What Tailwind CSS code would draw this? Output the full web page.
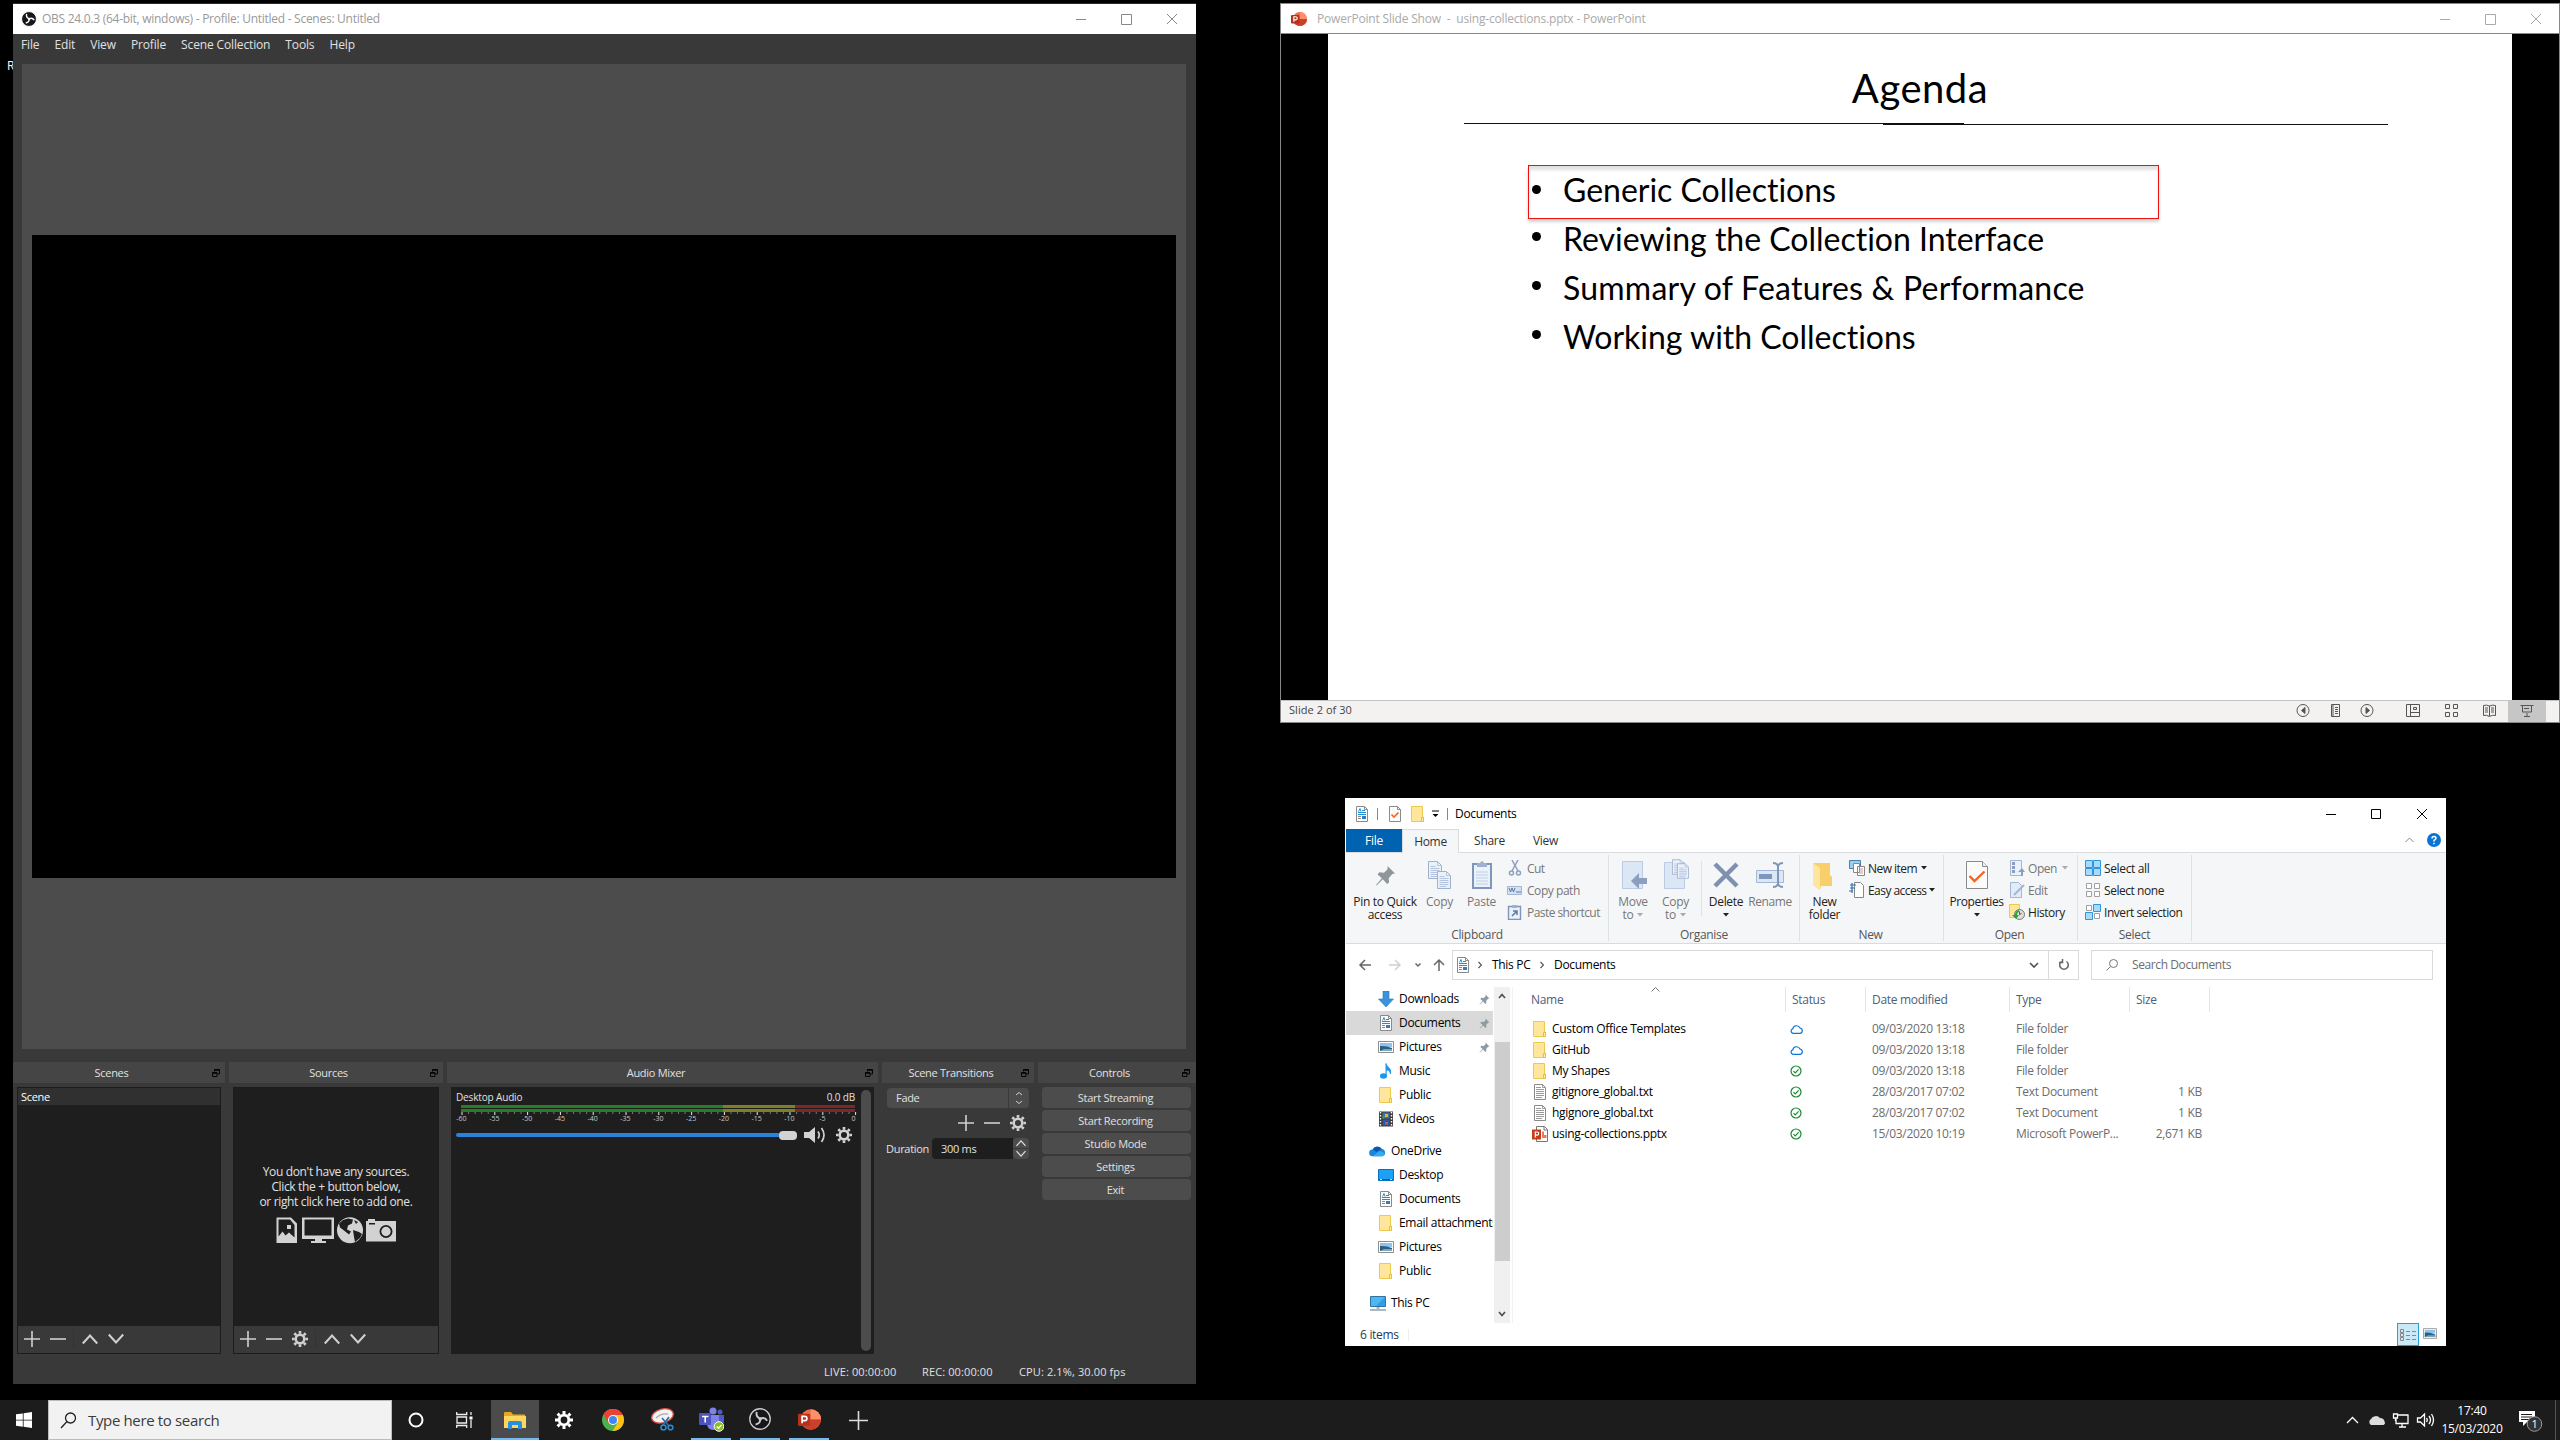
<!DOCTYPE html>
<html lang="en">
<head>
<meta charset="utf-8">
<title>Desktop</title>
<script src="https://cdn.jsdelivr.net/npm/@tailwindcss/browser@4"></script>
</head>
<body class="bg-black">
<svg class="hidden">
  <symbol id="gear" viewBox="0 0 18 18"><g fill="none" stroke="currentColor"><circle cx="9" cy="9" r="4.8" stroke-width="2.8"/><path stroke-width="3" d="M9 0v3M9 15v3M0 9h3M15 9h3M2.6 2.6l2.1 2.1M13.3 13.3l2.1 2.1M2.6 15.4l2.1-2.1M13.3 4.7l2.1-2.1"/></g></symbol>
  <symbol id="plus" viewBox="0 0 16 16"><path d="M8 0v16M0 8h16" stroke="currentColor" stroke-width="1.6"/></symbol>
  <symbol id="minus" viewBox="0 0 16 16"><path d="M0 8h16" stroke="currentColor" stroke-width="1.6"/></symbol>
  <symbol id="up" viewBox="0 0 16 16"><path d="M.8 12.5L8 4.500l7.200 8" fill="none" stroke="currentColor" stroke-width="2"/></symbol>
  <symbol id="down" viewBox="0 0 16 16"><path d="M.8 3.500L8 11.500l7.200-8" fill="none" stroke="currentColor" stroke-width="2"/></symbol>
  <symbol id="undock" viewBox="0 0 8 8"><g fill="none" stroke="#050505"><path d="M2.500 2.500v-2h5v4.500h-2"/><path d="M.5 3.500h4.500v4h-4.500z"/><path d="M2.500 1h5M.5 4h4.500" stroke-width="1.600"/></g></symbol>
  <symbol id="docs" viewBox="0 0 12 16"><path d="M.5.5h8l3 3v12h-11z" fill="#fff" stroke="#8a8a8a"/><path d="M8.500.5v3h3" fill="none" stroke="#8a8a8a"/><path d="M2.500 5.500L4 2.500l1 3M6 4.500h3M2 6.500h8M2 8.500h8" fill="none" stroke="#1e90d8"/><path d="M2 10.500h3M2 12.500h3" stroke="#888"/><path d="M6 10h4v3H6z" fill="#2b7fc4"/></symbol>
  <symbol id="folder" viewBox="0 0 13 16"><path d="M.5.500h11v10.500h1v4.500H.5z" fill="#ffe69a" stroke="#ecc94f"/><path d="M10.500 15.500v-4h2v4z" fill="#ffefb5" stroke="#e6be3d"/></symbol>
  <symbol id="txt" viewBox="0 0 12 16"><path d="M.5.5h8l3 3v12h-11z" fill="#fff" stroke="#8a8a8a"/><path d="M8.500.5v3h3M2 3.500h5M2 5.500h8M2 7.500h8M2 9.500h8M2 11.500h8M2 13.500h6" fill="none" stroke="#9a9a9a"/></symbol>
  <symbol id="pptx" viewBox="0 0 16 16"><path d="M4.500.5h8l3 3v12h-11z" fill="#fff" stroke="#777"/><path d="M12 .5v3.500h3.500" fill="none" stroke="#777"/><path d="M10 5.500h2v3.500h2.500v3H10z" fill="#f0785a"/><path d="M0 3.500h9v10H0z" fill="#c43e1c"/><path d="M3.300 11.500V6h1.800a1.500 1.500 0 010 3.200H3.300" fill="none" stroke="#fff" stroke-width="1.200"/></symbol>
  <symbol id="pic" viewBox="0 0 16 12"><path d="M.5.5h15v11H.5z" fill="#fff" stroke="#8f8f8f"/><path d="M2 2h12v4H2z" fill="#8cc3ef"/><path d="M2 5q6-.5 12 2v3H2z" fill="#2f5f7d"/><path d="M6 8h8v2H2z" fill="#78a8c4"/></symbol>
  <symbol id="music" viewBox="0 0 12 16"><ellipse cx="3.500" cy="13" rx="3.500" ry="2.700" fill="#1797f2"/><path d="M6 13V.5C6.500 4 11.500 4.500 10.500 11 10 7.500 8 7 6.500 7" fill="#1797f2" stroke="#1797f2"/></symbol>
  <symbol id="video" viewBox="0 0 14 16"><path d="M0 .5h14v15H0z" fill="#3a3a3a"/><path d="M1.500 1v14M12.500 1v14" stroke="#fff" stroke-width="1.400" stroke-dasharray="1.500 1.500"/><path d="M3.500 1.500h7v6h-7z" fill="#3b6fb5"/><path d="M3.500 8.500h7v6h-7z" fill="#2d56a0"/><path d="M6 3h3v3H6z" fill="#e8b52b"/><path d="M6 11h3v2.500H6z" fill="#dd5136"/><path d="M3.500 5h2v2.500h-2z" fill="#40a34a"/></symbol>
  <symbol id="dl" viewBox="0 0 16 16"><path d="M5 0h6v8h4.500L8 16 .5 8H5z" fill="#3c93dc" stroke="#2478be" stroke-width=".6"/></symbol>
  <symbol id="cloud" viewBox="0 0 18 12"><path d="M3.500 11.500a3.500 3.500 0 01.300-7A5.500 5.500 0 0113.500 4a3.800 3.800 0 01.5 7.500z" fill="#1a86dd"/><path d="M4 4.500A5.500 5.500 0 0113.500 4L8 7z" fill="#0c57a8"/><path d="M4 11.500l7-5.500 5 1.500a3 3 0 01-2 4z" fill="#33aaf2"/></symbol>
  <symbol id="desk" viewBox="0 0 16 12"><path d="M.5.500h15v11H.5z" fill="#1ba1f5" stroke="#0c6fbe"/><path d="M1 10.500h14" stroke="#0b5796"/><path d="M2 10.500h2M12 10.500h2" stroke="#fff" stroke-width=".8"/></symbol>
  <symbol id="pc" viewBox="0 0 16 15"><path d="M.5.500h15v10H.5z" fill="#4cb7f3" stroke="#35719b"/><path d="M15 1L6 10h9z" fill="#2c9fe6"/><path d="M6.500 12h3M0 14h16" stroke="#8aa0b2" stroke-width="1.400"/></symbol>
  <symbol id="pin" viewBox="0 0 20 20"><path d="M12 1l7 7-2.500.5-3.500 4 .5 4-2 1.500-4-4.500-6 6L1 19l5.500-6.500L2.500 9 4 7l4.500.3L12 4z" fill="currentColor"/></symbol>
  <symbol id="tri" viewBox="0 0 6 4"><path d="M0 0h6L3 3.500z" fill="currentColor"/></symbol>
  <symbol id="page" viewBox="0 0 14 18"><path d="M.5.5h9l4 4v13H.5z" fill="#e9f1fb" stroke="#9fb1cf"/><path d="M9.500.5v4h4M2.500 5.500h5M2.500 7.500h9M2.500 9.500h9M2.500 11.500h9M2.500 13.500h9M2.500 15.500h7" fill="none" stroke="#b6c5dd"/></symbol>
  <symbol id="checkdoc" viewBox="0 0 22 28"><path d="M.5.500h16l5 5v22H.5z" fill="#fbfbfb" stroke="#8a8a8a"/><path d="M16.500.5v5h5" fill="#eee" stroke="#8a8a8a"/><path d="M3.500 15l5 5L18.500 10.500" fill="none" stroke="#f4641e" stroke-width="2.400"/></symbol>
  <symbol id="checksmall" viewBox="0 0 12 16"><path d="M.5.5h8l3 3v12h-11z" fill="#fbfbfb" stroke="#8a8a8a"/><path d="M8.500.5v3h3" fill="none" stroke="#8a8a8a"/><path d="M2.500 8.500l2.500 2.500L9.500 6.500" fill="none" stroke="#f4641e" stroke-width="1.600"/></symbol>
  <symbol id="ppt" viewBox="0 0 18 18"><circle cx="10" cy="9" r="8" fill="#ed6c47"/><path d="M10 1a8 8 0 018 8h-8z" fill="#ff8f6b"/><path d="M2 9h16a8 8 0 01-16 0z" fill="#c9412a"/><rect y="4.500" width="9.500" height="9.500" rx="1" fill="#b7321b"/><path d="M3.200 12V6.500h2.100a1.700 1.700 0 010 3.400H3.200" fill="none" stroke="#fff" stroke-width="1.300"/></symbol>
  <symbol id="obs" viewBox="0 0 20 20"><circle cx="10" cy="10" r="9.300" fill="#17161a" stroke="currentColor" stroke-width="1.200"/><path d="M7 3.500q-1 4.500 3.200 6.200M10.200 9.700q4-2 6.300 1.800M10.200 9.700q.3 4.500-4.200 5.300" fill="none" stroke="currentColor" stroke-width="1.700"/><circle cx="10.200" cy="9.900" r="1.500" fill="currentColor"/></symbol>
  <symbol id="ok" viewBox="0 0 12 12"><circle cx="6" cy="6" r="5" fill="none" stroke="#188a2e" stroke-width="1.200"/><path d="M3.500 6.200l1.700 1.700 3.400-3.500" fill="none" stroke="#188a2e" stroke-width="1.200"/></symbol>
  <symbol id="cl" viewBox="0 0 13 10"><path d="M3 9.300a2.300 2.300 0 01-.2-4.500 3.800 3.800 0 017.200-.8 2.700 2.700 0 01.2 5.300z" fill="none" stroke="#0a76d6" stroke-width="1.200"/></symbol>
</svg>

<main class="relative h-[1440px] w-[2560px] overflow-hidden bg-black font-['Open_Sans',sans-serif] text-[12px] leading-4 tracking-[-0.3px] whitespace-nowrap">
<div class="absolute left-[7px] top-[58px] text-white">R</div>

<!-- OBS Studio -->
<section class="absolute left-[13px] top-[3px] flex h-[1381px] w-[1183px] flex-col overflow-hidden border-t border-[#2b2b2b] bg-[#3a393a] text-[11px] text-[#e1e0e1]">
  <header class="flex h-[30px] items-center bg-white pl-2 text-[12px] text-[#999]">
    <svg class="size-4 text-white"><use href="#obs"/></svg>
    <span class="ml-[5px] flex-1 tracking-[-0.27px]">OBS 24.0.3 (64-bit, windows) - Profile: Untitled - Scenes: Untitled</span>
    <svg class="mr-[17px] h-3 w-[104px]" fill="none" stroke="#888"><path d="M1 6.500h10M46.500 1.500h10v10h-10zM92 1l10 10M102 1L92 11"/></svg>
  </header>
  <nav class="flex h-[22px] items-center gap-[15px] pl-2 text-[12px] tracking-[-0.14px]"><span>File</span><span>Edit</span><span>View</span><span>Profile</span><span>Scene Collection</span><span>Tools</span><span>Help</span></nav>
  <div class="mr-[10px] ml-[9px] mt-2 h-[985px] shrink-0 bg-[#4c4c4c] px-[10px] pt-[171px]"><div class="h-[643px] bg-black"></div></div>

  <div class="mt-[13px] flex h-[292px] shrink-0 gap-1">
    <div class="w-[212px]">
      <h2 class="flex h-[21px] items-center bg-[#464546] pr-[5px]"><span class="flex-1 pr-0.5 text-center">Scenes</span><svg class="size-2"><use href="#undock"/></svg></h2>
      <div class="mx-1 mt-1 flex h-[267px] flex-col border border-[#1c1c1c] bg-[#1f1e1f] text-white">
        <div class="flex h-[17px] items-center bg-[#303030] pl-[3px]">Scene</div>
        <div class="flex-1"></div>
        <div class="flex h-[27px] items-center bg-[#3a393a] pb-px pl-1.5 text-[#d0d0d0]"><svg class="size-4"><use href="#plus"/></svg><svg class="ml-2.5 size-4"><use href="#minus"/></svg><i class="ml-[7px] h-[18px] w-px bg-[#333]"></i><svg class="ml-2 size-4"><use href="#up"/></svg><svg class="ml-2.5 size-4"><use href="#down"/></svg></div>
      </div>
    </div>
    <div class="w-[214px]">
      <h2 class="flex h-[21px] items-center bg-[#464546] pr-[5px]"><span class="flex-1 pr-0.5 text-center">Sources</span><svg class="size-2"><use href="#undock"/></svg></h2>
      <div class="mx-1 mt-1 flex h-[267px] flex-col border border-[#1c1c1c] bg-[#1f1e1f]">
        <div class="flex flex-1 flex-col items-center pt-[76px] text-[12px] leading-[15px] tracking-[-0.35px]"><span>You don't have any sources.</span><span>Click the + button below,</span><span>or right click here to add one.</span>
          <svg class="mt-[8px] h-[27px] w-[122px]" fill="#d2d2d2">
            <path fill-rule="evenodd" d="M2 .5h14l6 6V26H1.500V1zM3.500 2.500v17l4-5 3 4 3.500-3 5.500 5V8L15 2.500zM12 8h4v4h-4z"/>
            <path fill-rule="evenodd" d="M27 .5h32v21.500H47v2h4v2H36v-2h4v-2H27zM29.500 2.500v16h27v-16z"/>
            <circle cx="75" cy="13.200" r="13"/><path d="M68 3l5-1.500 5 1-1 4-4 2-1 4 4 2-2 3-5-4-4-3-1-4zM78 13l6 2 3 2-2 4-5 4-1-5zM79 3l4 2-2 2z" fill="#1f1e1f"/>
            <path fill-rule="evenodd" d="M91 4h2V2h7v2h21v20.500H91zM94 6v1.500h6V6zM111 8a6.500 6.500 0 100 13 6.500 6.500 0 000-13zM111 9.800a4.700 4.700 0 110 9.400 4.700 4.700 0 010-9.400z"/>
          </svg>
        </div>
        <div class="flex h-[27px] items-center bg-[#3a393a] pb-px pl-1.5 text-[#d0d0d0]"><svg class="size-4"><use href="#plus"/></svg><svg class="ml-2.5 size-4"><use href="#minus"/></svg><svg class="ml-2.5 size-4"><use href="#gear"/></svg><i class="ml-[7px] h-[18px] w-px bg-[#333]"></i><svg class="ml-2 size-4"><use href="#up"/></svg><svg class="ml-2.5 size-4"><use href="#down"/></svg></div>
      </div>
    </div>
    <div class="w-[431px]">
      <h2 class="flex h-[21px] items-center bg-[#464546] pr-[5px]"><span class="flex-1 text-center">Audio Mixer</span><svg class="size-2"><use href="#undock"/></svg></h2>
      <div class="mx-1 mt-1 flex h-[267px] bg-[#1f1e1f] pl-[5px]">
        <div class="w-[400px] pt-[3px]">
          <div class="flex h-[15px] items-center justify-between pr-[1px] pb-px text-[10px] tracking-[-0.15px]"><span>Desktop Audio</span><span>0.0 dB</span></div>
          <div class="ml-[5px] flex h-[3px] w-[394px]"><i class="w-[262px] bg-[#267f26]"></i><i class="w-[72px] bg-[#7f7f26]"></i><i class="flex-1 bg-[#7f2626]"></i></div>
          <div class="ml-[5px] mt-px flex h-[3px] w-[394px]"><i class="w-[262px] bg-[#267f26]"></i><i class="w-[72px] bg-[#7f7f26]"></i><i class="flex-1 bg-[#7f2626]"></i></div>
          <svg id="ticks" class="h-[14px] w-[400px] overflow-visible font-['Open_Sans',sans-serif] text-[7px] tracking-normal" fill="#c8c8c8"></svg>
          <div class="flex h-[18px] items-center">
            <i class="h-1 w-[323px] rounded-l bg-[#2a82da]"></i><i class="h-[9px] w-[18px] rounded-sm bg-[#d2d2d2]"></i>
            <svg class="ml-[7px] h-4 w-[23px]"><path d="M0 5h5l6-5v16l-6-5H0z" fill="#d2d2d2"/><path d="M14 4.500q2.500 3.500 0 7M17.500 1q5 7 0 14" fill="none" stroke="#d2d2d2" stroke-width="1.700"/></svg>
            <svg class="ml-[9px] size-4 text-[#d2d2d2]"><use href="#gear"/></svg>
          </div>
        </div>
        <i class="ml-[5px] mt-[3px] h-[261px] w-[10px] rounded-full bg-[#4c4c4c]"></i>
      </div>
    </div>
    <div class="w-[152px]">
      <h2 class="flex h-[21px] items-center bg-[#464546] pr-[5px]"><span class="flex-1 pr-px text-center">Scene Transitions</span><svg class="size-2"><use href="#undock"/></svg></h2>
      <div class="mt-[5px] flex flex-col px-[5px]">
        <div class="flex h-5 gap-px"><span class="flex flex-1 items-center rounded-l-sm bg-[#4c4c4c] pl-[9px]">Fade</span><span class="flex w-5 flex-col items-center justify-center rounded-r-sm bg-[#4c4c4c]"><svg class="h-3 w-1.5" fill="none" stroke="#d0d0d0"><path d="M0 3l3-2.500L6 3M0 9l3 2.500L6 9"/></svg></span></div>
        <div class="flex h-[30px] items-center justify-end gap-2.5 pr-[3px] text-[#d0d0d0]"><svg class="size-4"><use href="#plus"/></svg><svg class="size-4"><use href="#minus"/></svg><svg class="size-4"><use href="#gear"/></svg></div>
        <div class="flex h-[21px] items-center"><span class="-ml-px w-[46px] shrink-0">Duration</span><span class="flex h-[21px] w-[81px] items-center rounded-l bg-[#1f1e1f] pl-[9px]">300 ms</span><span class="flex flex-col gap-px"><i class="flex h-[10px] w-4 items-center justify-center rounded-t bg-[#4c4c4c]"><svg class="size-2.5"><use href="#up"/></svg></i><i class="flex h-[10px] w-4 items-center justify-center rounded-b bg-[#4c4c4c]"><svg class="size-2.5"><use href="#down"/></svg></i></span></div>
      </div>
    </div>
    <div class="w-[158px]">
      <h2 class="flex h-[21px] items-center bg-[#464546] pr-[6px]"><span class="flex-1 pr-px text-center">Controls</span><svg class="size-2"><use href="#undock"/></svg></h2>
      <div class="mt-1 flex flex-col gap-0.5 pl-1 pr-[5px] text-center leading-[21px]"><b class="h-[21px] rounded-sm bg-[#4c4c4c] pr-0.5 font-normal">Start Streaming</b><b class="h-[21px] rounded-sm bg-[#4c4c4c] pr-0.5 font-normal">Start Recording</b><b class="h-[21px] rounded-sm bg-[#4c4c4c] pr-0.5 font-normal">Studio Mode</b><b class="h-[21px] rounded-sm bg-[#4c4c4c] pr-0.5 font-normal">Settings</b><b class="h-[21px] rounded-sm bg-[#4c4c4c] pr-0.5 font-normal">Exit</b></div>
    </div>
  </div>
  <footer class="mt-[10px] flex h-4 items-center pl-[811px] tracking-[0.12px]"><span class="w-[98px]">LIVE: 00:00:00</span><span class="w-[97px]">REC: 00:00:00</span><span>CPU: 2.1%, 30.00 fps</span></footer>
</section>

<!-- PowerPoint slide show -->
<section class="absolute left-[1280px] top-[3px] flex h-[720px] w-[1280px] flex-col border border-[#888] bg-black">
  <header class="flex h-[30px] shrink-0 items-center border-b border-[#888] bg-white pl-[10px] text-[#aaa]">
    <svg class="size-4"><use href="#ppt"/></svg><span class="ml-[10px] flex-1 whitespace-pre tracking-[-0.19px]">PowerPoint Slide Show  -  using-collections.pptx - PowerPoint</span>
    <svg class="mr-[16px] h-3 w-[104px]" fill="none" stroke="#aaa"><path d="M1 6.500h10M46.500 1.500h10v10h-10zM92 1l10 10M102 1L92 11"/></svg>
  </header>
  <div class="ml-[47px] flex h-[666px] w-[1184px] flex-col items-center bg-white pt-[26px] font-['Lato',sans-serif] text-black">
    <h1 class="h-[56px] text-[40px] leading-[56px] tracking-[0.5px]">Agenda</h1>
    <svg class="mt-[6px] ml-[12px] h-[3px] w-[926px]" shape-rendering="crispEdges"><path d="M1 1.500h500M420 2.500h505" stroke="#111"/></svg>
    <ul class="mt-[40px] -ml-[153px] w-[631px] text-[32px] leading-[49px] tracking-[-0.01px] [font-variant-ligatures:none]">
      <li class="flex h-[54px] border border-[#f01010] shadow-[0_3px_3px_rgba(0,0,0,.18),inset_0_4px_3px_rgba(0,0,0,.12)]"><i class="mr-[22px] ml-[3px] mt-[19px] size-[9px] rounded-full bg-black"></i><span class="-mt-px">Generic Collections</span></li>
      <li class="-mt-[5px] flex h-[49px]"><i class="mr-[22px] ml-[4px] mt-[18px] size-[9px] rounded-full bg-black"></i>Reviewing the Collection Interface</li>
      <li class="flex h-[49px]"><i class="mr-[22px] ml-[4px] mt-[18px] size-[9px] rounded-full bg-black"></i><span class="tracking-[0.22px]">Summary of Features &amp; Performance</span></li>
      <li class="flex h-[49px]"><i class="mr-[22px] ml-[4px] mt-[18px] size-[9px] rounded-full bg-black"></i>Working with Collections</li>
    </ul>
  </div>
  <footer class="flex flex-1 items-center border-t border-[#c4c4c4] bg-[#f3f2f1] pl-2 text-[11px] text-[#444]">
    <span class="flex-1 pb-[3px] tracking-[0.05px]">Slide 2 of 30</span>
    <svg class="h-[21px] w-[264px] self-stretch" fill="none" stroke="#555"><path d="M213 0h38v22h-38z" fill="#c6c6c6" stroke="none"/><circle cx="8" cy="9.500" r="6"/><path d="M10 6.500v6l-3.500-3z" fill="#555"/><path d="M36.500 3.500h8v12h-8zM38 4v11M40 6.500h3M40 8.500h3M40 10.500h3M40 12.500h3"/><circle cx="72" cy="9.500" r="6"/><path d="M71 6.500v6l3.500-3z" fill="#555"/><path d="M111.500 3.500h13v12h-13zM115.500 4v11M115.500 11.500h9M118.500 6.500h3v2h-3zM150.500 3.500h4v4h-4zM158.500 3.500h4v4h-4zM150.500 11.500h4v4h-4zM158.500 11.500h4v4h-4zM188.500 4.500q3-1 6 .5 3-1.500 6-.5v10q-3-1-6 1-3-2-6-1zM194.500 5v10M190 7h3M190 9h3M190 11h3M196 7h3M196 9h3M196 11h3M225.500 4.500h13M227.500 5v6h9V5M232 12v4M229 15.500h6M229 7.500h5"/></svg>
  </footer>
</section>

<!-- File Explorer -->
<section class="absolute left-[1345px] top-[798px] flex h-[548px] w-[1101px] flex-col bg-white pl-px text-[#1a1a1a]">
  <header class="flex h-[31px] items-center pl-[10px] text-black">
    <svg class="h-4 w-3"><use href="#docs"/></svg><i class="ml-[9px] h-3 w-px bg-[#888]"></i><svg class="ml-[11px] h-4 w-3"><use href="#checksmall"/></svg><svg class="ml-[10px] h-4 w-[13px]"><use href="#folder"/></svg>
    <svg class="ml-[8px] h-2 w-[7px]"><path d="M0 1h7" stroke="#000"/><path d="M.5 4h6l-3 3z"/></svg><i class="ml-[8px] h-3 w-px bg-[#888]"></i><span class="ml-[7px] flex-1">Documents</span>
    <svg class="mr-[17px] h-3 w-[104px]" fill="none" stroke="#000"><path d="M1 6.500h10M46.500 1.500h9v9h-9zM92 1l10 10M102 1L92 11"/></svg>
  </header>
  <nav class="flex h-[23px] text-center leading-6 text-[#333]"><span class="w-14 bg-[#0063b1] text-white">File</span><span class="relative z-1 h-6 w-[57px] border border-b-0 border-[#dadbdc] bg-[#f5f6f7]">Home</span><span class="w-[61px]">Share</span><span class="w-[51px]">View</span><span class="flex flex-1 items-center justify-end gap-[13px] pr-[5px] pb-0.5"><svg class="h-[6px] w-[9px]" fill="none" stroke="#888"><path d="M.5 5l4-4 4 4"/></svg><svg class="size-[14px]"><circle cx="7" cy="7" r="7" fill="#0a74d4"/><path d="M5 5.500q0-2 2-2t2 1.800q0 1-2 2v1.200M7 9.800v1.500" fill="none" stroke="#fff" stroke-width="1.500"/></svg></span></nav>
  <div class="flex h-[92px] border-y border-[#dadbdc] bg-[#f5f6f7] pt-[2px] text-center leading-[13px]">
    <div class="flex h-[86px] w-[263px] flex-col border-r border-[#e0e1e2]">
      <div class="flex h-[74px]">
        <div class="flex w-[78px] flex-col items-center text-[#222]"><svg class="mt-[10px] mb-[9px] size-[21px] text-[#8f9699]"><use href="#pin"/></svg><span>Pin to Quick</span><span>access</span></div>
        <div class="flex w-[31px] flex-col items-center text-[#777]"><svg class="mt-[6px] mb-[6px] ml-px h-[28px] w-[25px]"><use href="#page" width="14" height="18"/><use href="#page" x="9" y="10" width="14" height="18"/></svg><span>Copy</span></div>
        <div class="flex w-[53px] flex-col items-center text-[#777]"><svg class="mt-[5px] mb-[6px] h-[29px] w-5"><path d="M1 4h18v24H1z" fill="#e9f1fb" stroke="#8095bb" stroke-width="2"/><path d="M4 12h12M4 15h12M4 18h12M4 21h12M4 24h12" stroke="#c3d0e4"/><path d="M5 3h3q2-4 4 0h3v4H5z" fill="#9fb1cf"/></svg><span>Paste</span></div>
        <div class="-ml-px flex w-[95px] flex-col pt-0.5 text-[#777] tracking-[-0.55px]">
          <span class="flex h-[22px] items-center"><svg class="mr-[4px] h-4 w-4" fill="none" stroke="#8d9fc0" stroke-width="1.500"><path d="M5 0l6 11M11 0L5 11"/><circle cx="4.500" cy="13" r="2"/><circle cx="11.500" cy="13" r="2"/></svg>Cut</span>
          <span class="flex h-[22px] items-center tracking-[-0.45px]"><svg class="mr-[4px] h-4 w-4"><path d="M.5 4.500h14v8H.5z" fill="#d5e1f2" stroke="#a5b6d2"/><path d="M2 6l1.500 4L5 6l1.500 4L8 6M9 10h5" fill="none" stroke="#61779f"/></svg>Copy path</span>
          <span class="flex h-[22px] items-center"><svg class="mr-[4px] h-4 w-4"><path d="M1.500 2.500h12v13h-12z" fill="#e9f1fb" stroke="#8095bb" stroke-width="1.400"/><path d="M5 1h5v3H5z" fill="#9fb1cf"/><path d="M5 12l4-4M6 7h4v4" fill="none" stroke="#61779f" stroke-width="1.500"/></svg>Paste shortcut</span>
        </div>
      </div><span class="text-[#555]">Clipboard</span>
    </div>
    <div class="flex h-[86px] w-[191px] flex-col border-r border-[#e0e1e2]">
      <div class="flex h-[74px]">
        <div class="flex w-[46px] flex-col items-center pl-[2px] text-[#777]"><svg class="mt-[6px] mb-[6px] ml-1 h-7 w-[26px]"><path d="M.5.500h20v27H.5z" fill="#dce7f5" stroke="#bccbe2"/><path d="M9 20l8-8v5h8v6h-8v5z" fill="#8d9fc0"/></svg><span>Move</span><span class="flex items-center gap-1">to <svg class="h-1 w-1.5 text-[#aaa]"><use href="#tri"/></svg></span></div>
        <div class="flex w-[41px] flex-col items-center text-[#777]"><svg class="mt-[4px] mb-[6px] ml-0.5 h-[30px] w-[26px]"><path d="M.5 3.500h20v26H.5z" fill="#dce7f5" stroke="#bccbe2"/><use href="#page" x="8" width="12" height="16"/><use href="#page" x="13" y="4" width="12" height="16"/></svg><span>Copy</span><span class="flex items-center gap-1">to <svg class="h-1 w-1.5 text-[#aaa]"><use href="#tri"/></svg></span></div>
        <i class="ml-[5px] mt-[6px] h-[55px] w-px bg-[#e0e1e2]"></i>
        <div class="flex w-[46px] flex-col items-center pl-[2px] text-[#222]"><svg class="mt-[7px] mb-[7px] h-[26px] w-[26px]"><path d="M2 2l22 22M24 2L2 24" stroke="#7f90b0" stroke-width="4.500"/></svg><span>Delete</span><svg class="mt-[5px] h-1 w-1.5"><use href="#tri"/></svg></div>
        <div class="flex w-[44px] flex-col items-center text-[#777] tracking-[-0.4px]"><svg class="mt-[6px] mb-[6px] h-7 w-[28px]"><path d="M.5 9.500h27v12H.5z" fill="#dce7f5" stroke="#a5b6d2"/><path d="M3 13h13v5H3z" fill="#8095bb"/><path d="M17 2q4 0 5 3 1-3 5-3M22 4v19M17 26q4 0 5-3 1 3 5 3" fill="none" stroke="#8095bb" stroke-width="2"/></svg><span>Rename</span></div>
      </div><span class="text-[#555]">Organise</span>
    </div>
    <div class="flex h-[86px] w-[144px] flex-col border-r border-[#e0e1e2]">
      <div class="flex h-[74px]">
        <div class="flex w-[49px] flex-col items-center text-[#222]"><svg class="mt-[7px] mb-[5px] -ml-1 h-[28px] w-[19px]"><path d="M0 1h17v12l2 2v9H8L7 28l-7-5z" fill="#f9cf6b"/><path d="M0 1l7 5v22l-7-5z" fill="#ffe6a0"/></svg><span>New</span><span>folder</span></div>
        <div class="flex w-[94px] flex-col pt-0.5 text-[#222] tracking-[-0.55px]">
          <span class="flex h-[22px] items-center"><svg class="mr-[3px] h-4 w-4" fill="#fff"><path d="M.5.500h11v8H.5z" fill="#9bd0f0" stroke="#4d7fa8"/><path d="M4.500 3.500h6v9h-6zM8.500 6.500h7v9h-7z" stroke="#888"/><path d="M10 9h4M10 11h4M10 13h4" stroke="#c99"/></svg>New item<svg class="ml-1 h-1 w-1.5"><use href="#tri"/></svg></span>
          <span class="flex h-[22px] items-center"><svg class="mr-[3px] h-4 w-4" fill="#fff"><path d="M5.500.5h6l3 3v12h-9z" stroke="#888"/><path d="M1 3h6M1 6h5M0 9h4M3 1v10" stroke="#2f74b5" stroke-width="1.200"/></svg>Easy access<svg class="ml-[3px] h-1 w-1.5"><use href="#tri"/></svg></span>
        </div>
      </div><span class="pr-0.5 text-[#555]">New</span>
    </div>
    <div class="flex h-[86px] w-[134px] flex-col border-r border-[#e0e1e2]">
      <div class="flex h-[74px]">
        <div class="flex w-[65px] flex-col items-center text-[#222]"><svg class="mt-[6px] mb-[6px] h-7 w-[22px]"><use href="#checkdoc"/></svg><span class="tracking-[-0.4px]">Properties</span><svg class="mt-[5px] h-1 w-1.5"><use href="#tri"/></svg></div>
        <div class="flex w-[68px] flex-col pt-0.5 text-[#222] tracking-[-0.45px]">
          <span class="flex h-[22px] items-center text-[#777]"><svg class="mr-[3px] h-4 w-4"><path d="M1.500.500h11v15h-11z" fill="#e9f1fb" stroke="#a5b6d2"/><path d="M3 2h3v3H3zM3 6h3v3H3zM3 10h3v3H3z" fill="#8d9fc0"/><path d="M12 16v-4H9l4-4 3 4h-2v4z" fill="#8d9fc0"/></svg>Open<svg class="ml-[5px] h-1 w-1.5 text-[#aaa]"><use href="#tri"/></svg></span>
          <span class="flex h-[22px] items-center text-[#777]"><svg class="mr-[3px] h-4 w-4"><path d="M1.500.500h8l3 3v12h-11z" fill="#e1ecf8" stroke="#a5b6d2"/><path d="M5 13L15 3" stroke="#a5b6d2" stroke-width="2"/></svg>Edit</span>
          <span class="flex h-[22px] items-center"><svg class="mr-[3px] h-4 w-4"><path d="M.5.500h10v13H.5z" fill="#ffe69a" stroke="#ecc94f"/><circle cx="10.500" cy="10.500" r="5" fill="#ddd" stroke="#777"/><path d="M10.500 7.500v3l2-1" fill="none" stroke="#555"/><path d="M10 6q-4 1-4 5H3l4 4 3-4H8q0-3 2-3z" fill="#2aa52f"/></svg>History</span>
        </div>
      </div><span class="pr-0.5 text-[#555]">Open</span>
    </div>
    <div class="flex h-[86px] w-[114px] flex-col border-r border-[#e0e1e2]">
      <div class="flex h-[74px] flex-col pl-[7px] pt-0.5 text-[#222] tracking-[-0.45px]">
        <span class="flex h-[22px] items-center tracking-[-0.35px]"><svg class="mr-[3px] h-4 w-4" fill="#a9dbf8" stroke="#2e95e3"><path d="M.5.500h7v7h-7zM8.500.500h7v7h-7zM.5 8.500h7v7h-7zM8.500 8.500h7v7h-7z"/></svg>Select all</span>
        <span class="flex h-[22px] items-center"><svg class="mr-[3px] h-4 w-4" fill="#fff" stroke="#a0a0a0"><path d="M1.500 1.500h5v5h-5zM9.500 1.500h5v5h-5zM1.500 9.500h5v5h-5zM9.500 9.500h5v5h-5z"/></svg>Select none</span>
        <span class="flex h-[22px] items-center"><svg class="mr-[3px] h-4 w-4" fill="#fff" stroke="#a0a0a0"><path d="M1.500 1.500h5v5h-5zM9.500 9.500h5v5h-5z"/><path d="M8.500.500h7v7h-7zM.5 8.500h7v7h-7z" fill="#a9dbf8" stroke="#2e95e3"/></svg>Invert selection</span>
      </div><span class="text-[#555]">Select</span>
    </div>
  </div>
  <div class="mt-[6px] flex h-[30px] items-center">
    <svg class="h-4 w-[86px] shrink-0" fill="none" stroke="#666" stroke-width="1.500"><path d="M25 8H14M19 3l-5 5 5 5"/><path d="M43 8h11M49 3l5 5-5 5" stroke="#d0d0d0"/><path d="M69.500 6.500l2.500 2.500 2.500-2.500"/></svg>
    <svg class="h-4 w-[14px] shrink-0" fill="none" stroke="#666" stroke-width="1.500"><path d="M7 14V3M2 8l5-5 5 5"/></svg>
    <div class="ml-[6px] flex h-[30px] w-[627px] items-center border border-[#d9d9d9] bg-white text-black"><svg class="ml-[4px] h-4 w-3"><use href="#docs"/></svg><svg class="ml-[9px] h-2 w-1" fill="none" stroke="#555" stroke-width="1.200"><path d="M.5 1l3 3-3 3"/></svg><span class="ml-[10px] w-[40px]">This PC</span><svg class="ml-[8px] h-2 w-1" fill="none" stroke="#555" stroke-width="1.200"><path d="M.5 1l3 3-3 3"/></svg><span class="ml-[10px] flex-1">Documents</span><svg class="mr-[9px] h-[7px] w-[10px]" fill="none" stroke="#555" stroke-width="1.600"><path d="M1 1l4 4 4-4"/></svg><span class="flex h-full w-[30px] items-center justify-center border-l border-[#d9d9d9]"><svg class="size-3" fill="none" stroke="#666" stroke-width="1.500"><path d="M3.500 2.500a4.300 4.300 0 105 0M4.500 0v3.500H1"/></svg></span></div>
    <div class="ml-[12px] flex h-[30px] w-[342px] items-center border border-[#d9d9d9] text-[#6d6d6d]"><svg class="ml-[14px] size-3" fill="none" stroke="#777"><circle cx="7.500" cy="4.500" r="4"/><path d="M4.500 7.500L.5 11.500"/></svg><span class="ml-[14px] tracking-[-0.4px]">Search Documents</span></div>
  </div>
  <div class="mt-[7px] flex h-[336px]">
    <div id="nav" class="w-[147px] overflow-hidden text-black"></div>
    <div class="ml-px flex w-[16px] flex-col items-center bg-[#f0f0f0]"><svg class="mt-[6px] h-[6px] w-[8px]" fill="none" stroke="#505050" stroke-width="1.700"><path d="M1 5l3-3.500L7 5"/></svg><i class="mt-[43px] h-[219px] w-[15px] bg-[#cdcdcd]"></i><svg class="mt-[50px] h-[6px] w-[8px]" fill="none" stroke="#505050" stroke-width="1.700"><path d="M1 1l3 3.500L7 1"/></svg></div>
    <i class="ml-[2px] w-px bg-[#f2f2f2]"></i>
    <div class="flex-1">
      <div class="relative flex h-[25px] leading-[26px] text-[#4c607a]"><svg class="absolute left-[138px] top-0 h-[5px] w-[9px]" fill="none" stroke="#777"><path d="M.5 4.500l4-4 4 4"/></svg><span class="w-[273px] border-r border-[#e5e5e5] pl-[18px]">Name</span><span class="w-[80px] border-r border-[#e5e5e5] pl-[6px]">Status</span><span class="w-[144px] border-r border-[#e5e5e5] pl-[6px]">Date modified</span><span class="w-[120px] border-r border-[#e5e5e5] pl-[6px]">Type</span><span class="w-[80px] border-r border-[#e5e5e5] pl-[6px]">Size</span></div>
      <div id="files" class="mt-[6px]"></div>
    </div>
  </div>
  <footer class="flex flex-1 items-center pl-[14px] text-[#1e395b]"><span class="w-[48px]">6 items</span><i class="h-3 w-px bg-[#eee]"></i><span class="flex-1"></span>
    <span class="flex h-[23px] w-[22px] items-center justify-center border border-[#26a0da] bg-[#cbe8f6]"><svg class="h-3 w-4" fill="none" stroke="#888"><path d="M.5.500h3v3h-3zM.5 4.500h3v3h-3zM.5 8.500h3v3h-3zM6 2.500h4M12 2.500h4M6 6.500h4M12 6.500h4M6 10.500h4M12 10.500h4"/></svg></span><svg class="mb-[3px] ml-[4px] mr-[9px] h-[11px] w-[14px]"><use href="#pic"/></svg></footer>
</section>

<!-- Taskbar -->
<section class="absolute top-[1400px] left-0 flex h-10 w-[2560px] items-center bg-[#1c1c1c] text-white">
  <span class="flex w-12 justify-center"><svg class="size-4" fill="#fff"><path d="M0 2.300L6.800 1.400v6.300H0zM7.600 1.200L16 0v7.700H7.600zM0 8.500h6.800v6.200L0 13.800zM7.600 8.500H16V16l-8.400-1.200z"/></svg></span>
  <div class="flex h-10 w-[344px] items-center border border-[#bbb] bg-[#f2f2f2] pl-[11px] text-[15px] tracking-[-0.35px] text-[#3b3b3b]"><svg class="size-[17px]" fill="none" stroke="#222" stroke-width="1.300"><circle cx="10.500" cy="6" r="5"/><path d="M7 9.500L1 16"/></svg><span class="ml-[11px]">Type here to search</span></div>
  <span class="flex w-[48px] justify-center"><svg class="size-4" fill="none" stroke="#fff" stroke-width="2"><circle cx="8" cy="8" r="6.500"/></svg></span>
  <span class="flex w-[51px] justify-center pr-[3px]"><svg class="h-4 w-[17px]" fill="none" stroke="#eee" stroke-width="1.300"><path d="M.7 0v2.500h10V0M1 5h9.500v6H1zM.7 16v-2.500h10V16M15 0v3M15 8v8"/><path d="M13.500 4.500h3v3h-3z" fill="#fff" stroke="none"/></svg></span>
  <span class="flex h-10 w-12 items-center justify-center border-b-2 border-[#76b9ed] bg-[#4b4b4b]"><svg class="mt-[2px] h-[18px] w-[22px]"><path d="M0 2q0-1 1-1h6l2 2.500h12V17H0z" fill="#e8a824"/><path d="M0 5h22v12H0z" fill="#ffd75e"/><path d="M4 18v-6q0-2 2-2h10q2 0 2 2v6h-4v-4H8v4z" fill="#2a8fdc"/></svg></span>
  <span class="flex w-[49px] justify-center"><svg class="size-[18px]"><use href="#gear"/></svg></span>
  <span class="flex w-[49px] justify-center"><svg class="size-[22px]" viewBox="0 0 22 22"><circle cx="11" cy="11" r="11" fill="#4caf50"/><path d="M1.500 5.500A11 11 0 0120.500 5.500L11 11z" fill="#ea4335"/><path d="M1.500 5.500L6.500 14 11 11V6h9.800A11 11 0 001.500 5.500z" fill="#ea4335"/><path d="M20.800 6H11l4.500 8L10.500 22A11 11 0 0020.800 6z" fill="#fbc116"/><circle cx="11" cy="11" r="5" fill="#fff"/><circle cx="11" cy="11" r="4" fill="#4285f4"/></svg></span>
  <span class="flex w-[49px] justify-center"><svg class="size-6" viewBox="0 0 24 24"><ellipse cx="12.500" cy="8" rx="11" ry="6.800" transform="rotate(-15 12 8)" fill="#f3f3f3" stroke="#d9534a" stroke-width="1.300"/><path d="M6 10q5-5 12-4" stroke="#aaa" fill="none" stroke-width="1.300"/><path d="M12 10l7 8M19 9l-6 8" stroke="#2b6ea8" stroke-width="1.700"/><circle cx="20.500" cy="19.500" r="2.300" fill="none" stroke="#2b8bd0" stroke-width="1.600"/><circle cx="13.500" cy="19.500" r="2.500" fill="none" stroke="#2b8bd0" stroke-width="1.600"/></svg></span>
  <span class="ml-[5px] flex h-10 w-10 items-center justify-center border-b-2 border-[#76b9ed]"><svg class="size-[25px]" viewBox="0 0 25 25"><circle cx="14" cy="4" r="3.500" fill="#7b83eb"/><circle cx="21" cy="5" r="2.500" fill="#5059c9"/><path d="M8 8h12v9a6 6 0 01-12 0z" fill="#7b83eb"/><path d="M20 8h5v7q-1 4-5 4z" fill="#5059c9"/><rect y="6" width="12" height="12" rx="1" fill="#4b53bc"/><path d="M3 9.500h6.500M6.200 9.500v6" stroke="#fff" stroke-width="1.600"/><circle cx="20" cy="19.500" r="4.800" fill="#8cbd18" stroke="#fff"/><path d="M17.700 19.500l1.800 1.800 3-3.300" stroke="#fff" fill="none" stroke-width="1.400"/></svg></span>
  <span class="ml-[9px] flex h-10 w-10 items-center justify-center border-b-2 border-[#76b9ed]"><svg class="size-[22px] text-[#ccc]"><use href="#obs"/></svg></span>
  <span class="ml-[9px] flex h-10 w-10 items-center justify-center border-b-2 border-[#76b9ed]"><svg class="size-[23px]"><use href="#ppt"/></svg></span>
  <span class="ml-[4px] flex w-[50px] justify-center"><svg class="size-[19px]" fill="none" stroke="#ddd" stroke-width="1.600"><path d="M9.500 0v19M0 9.500h19"/></svg></span>
  <span class="flex-1"></span>
  <svg class="h-5 w-[90px]" fill="none" stroke="#fff" stroke-width="1.300"><path d="M1 13l5.500-5.500L12 13"/><path d="M25 15a3.500 3.500 0 010-6 5.500 5.500 0 019-1q4 0 4.500 3.500a2.500 2.500 0 01-1 3.500z" fill="#ddd" stroke="none"/><path d="M51 5h11v8.500H50V9M56 14v3M53 17h7M47.500 4v4h4V4zM49.500 8v3"/><path d="M71.500 8h3l4-4v12l-4-4h-3zM80.500 8q1.500 2 0 4M83 6q3 4 0 8M85.500 4q4 6 0 12"/></svg>
  <span class="ml-[5px] flex w-[62px] flex-col items-center text-[12px] leading-[18px] tracking-[-0.25px]"><span>17:40</span><span>15/03/2020</span></span>
  <svg class="ml-[15px] h-6 w-[26px]"><path d="M1 3h16v11h-8l-4 4v-4H1z" fill="#fff"/><path d="M3 6.500h11M3 9h11M3 11.500h8" stroke="#1c1c1c"/><circle cx="16.500" cy="16" r="7.300" fill="#333" stroke="#999"/><text x="13.500" y="20" fill="#fff" font-size="11">1</text></svg>
  <i class="ml-[11px] mr-1 h-10 w-px bg-[#555]"></i>
</section>
</main>

<script>
  // Audio meter scale: one tick per dB, a label every five.
  const x = i => 5.500 + i * 6.560;
  let t = '';
  for (let i = 0; i <= 60; i++) {
    const major = i % 5 === 0;
    t += `<rect x="${x(i)}" y="0" width="1" height="${major ? 3 : 2}" fill="${major ? '#e8e8e8' : '#777'}"/>`;
    if (major) t += `<text x="${x(i) - (i === 60 ? 1.500 : 0)}" y="9" text-anchor="middle">${i - 60}</text>`;
  }
  document.getElementById('ticks').innerHTML = t;

  const size = { docs: 'h-4 w-3', folder: 'h-4 w-[13px]', txt: 'h-4 w-3', pptx: 'h-4 w-4', pic: 'h-3 w-4', music: 'h-4 w-3', video: 'h-4 w-[14px]', dl: 'h-4 w-4', cloud: 'h-3 w-[17px]', desk: 'h-3 w-4', pc: 'h-[15px] w-4' };
  const icon = n => `<span class="flex w-[17px] shrink-0 justify-center"><svg class="${size[n]}"><use href="#${n}"/></svg></span>`;

  const nav = [['dl', 'Downloads', 1], ['docs', 'Documents', 1], ['pic', 'Pictures', 1], ['music', 'Music'], ['folder', 'Public'], ['video', 'Videos'], null, ['cloud', 'OneDrive', 0, 1], ['desk', 'Desktop'], ['docs', 'Documents'], ['folder', 'Email attachments'], ['pic', 'Pictures'], ['folder', 'Public'], null, ['pc', 'This PC', 0, 1]];
  document.getElementById('nav').innerHTML = nav.map((n, i) => n
    ? `<div class="flex h-6 items-center gap-[5px] ${n[3] ? 'pl-[23px]' : 'pl-[31px]'} ${i === 1 ? 'bg-[#d9d9d9]' : ''}">${icon(n[0])}<span>${n[1]}</span>${n[2] ? '<svg class="ml-auto mr-[3px] size-[11px] shrink-0 text-[#8f9ba3]"><use href="#pin"/></svg>' : ''}</div>`
    : '<div class="h-2"></div>').join('');

  const files = [
    ['folder', 'Custom Office Templates', 'cl', '09/03/2020 13:18', 'File folder', ''],
    ['folder', 'GitHub', 'cl', '09/03/2020 13:18', 'File folder', ''],
    ['folder', 'My Shapes', 'ok', '09/03/2020 13:18', 'File folder', ''],
    ['txt', 'gitignore_global.txt', 'ok', '28/03/2017 07:02', 'Text Document', '1 KB'],
    ['txt', 'hgignore_global.txt', 'ok', '28/03/2017 07:02', 'Text Document', '1 KB'],
    ['pptx', 'using-collections.pptx', 'ok', '15/03/2020 10:19', 'Microsoft PowerP...', '2,671 KB']];
  document.getElementById('files').innerHTML = files.map(f => `<div class="flex h-[21px] items-center text-[#6d6d6d]"><span class="flex w-[277px] items-center gap-[4px] pl-[18px] text-black">${icon(f[0])}${f[1]}</span><span class="w-[82px]">${f[2] === 'cl' ? '<svg class="h-[10px] w-[13px]"><use href="#cl"/></svg>' : '<svg class="size-3"><use href="#ok"/></svg>'}</span><span class="w-[144px]">${f[3]}</span><span class="w-[120px]">${f[4]}</span><span class="w-[66px] text-right">${f[5]}</span></div>`).join('');
</script>
</body>
</html>
